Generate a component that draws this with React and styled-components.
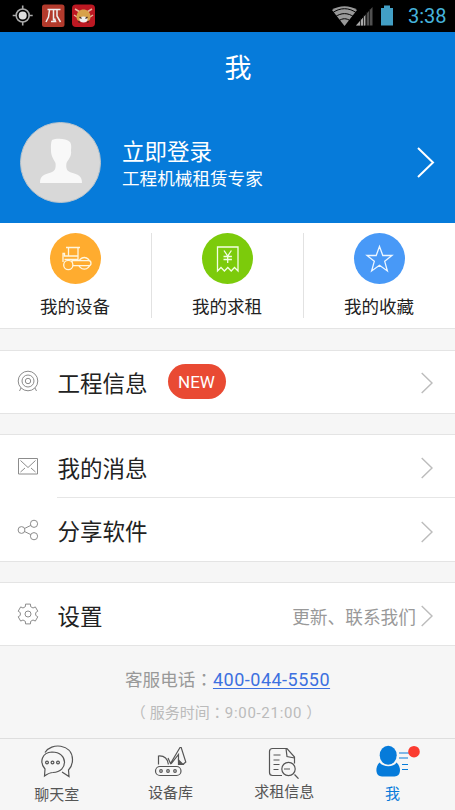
import React from 'react'
import styled, { createGlobalStyle } from 'styled-components'

const GlobalStyle = createGlobalStyle`
    * {
        box-sizing: border-box;
    }

    body {
        margin: 0;
        background: #f6f6f6;
        font-family: Roboto, "Noto Sans CJK SC", sans-serif;
    }

    svg {
        display: block;
        flex: none;
        fill: none;
    }
`;

const Screen = styled.div`
    display: flex;
    flex-direction: column;
    width: 455px;
    height: 810px;
    overflow: hidden;
    background: #f6f6f6;
`;

const StatusBar = styled.div`
    display: flex;
    justify-content: space-between;
    height: 32px;
    padding: 0 8px 0 12px;
    background: #000;
`;

const StatusGroup = styled.div`
    display: flex;
    align-items: center;
`;

const Clock = styled.span`
    width: 39px;
    margin-left: 13px;
    color: #46b4dc;
    font-size: 20px;
    line-height: 32px;
    white-space: nowrap;
`;

const Header = styled.header`
    height: 191px;
    background: #067bda;
    color: #fff;
`;

const Title = styled.h1`
    height: 74px;
    margin: 0;
    padding-left: 21px;
    font-size: 27px;
    font-weight: 400;
    line-height: 74px;
    text-align: center;
`;

const Profile = styled.div`
    display: flex;
    align-items: center;
    height: 82px;
    margin-top: 15px;
    padding: 0 20px;
`;

const Avatar = styled.div`
    width: 81px;
    height: 81px;
    border: 1px solid #b9c4cc;
    border-radius: 50%;
    background: #d8d8d8;
`;

const ProfileText = styled.div`
    flex: 1;
    padding: 4px 0 0 21px;
`;

const Login = styled.div`
    font-size: 22.5px;
    line-height: 30px;
`;

const Slogan = styled.div`
    font-size: 17.6px;
    line-height: 24px;
`;

const Shortcuts = styled.div`
    display: flex;
    height: 106px;
    padding: 10px 0;
    border-bottom: 1px solid #e4e4e4;
    background: #fff;
`;

const Shortcut = styled.div`
    display: flex;
    flex: 1;
    flex-direction: column;
    align-items: center;
    padding-right: 1px;
    color: #222;
    font-size: 17.5px;
    line-height: 24px;

    & + & {
        border-left: 1px solid #e2e2e2;
    }
`;

const Bubble = styled.div`
    width: 51px;
    height: 51px;
    margin-bottom: 11px;
    border-radius: 50%;
    background: ${props => props.$color};
`;

const Groups = styled.div`
    display: flex;
    flex-direction: column;
    gap: 20px;
    padding-top: 21px;
`;

const Group = styled.div`
    border-top: 1px solid #e4e4e4;
    border-bottom: 1px solid #e4e4e4;
    background: #fff;
`;

const Row = styled.div`
    display: flex;
    align-items: center;
    height: ${props => props.$height || 62}px;
    padding: 0 22px ${props => props.$bottom || 0}px 17px;
`;

const RowLabel = styled.span`
    margin-left: 18.5px;
    padding-top: 5px;
    color: #222;
    font-size: 22.5px;
    line-height: 30px;
`;

const Divider = styled.div`
    height: 1px;
    margin-left: 57px;
    background: #e6e6e6;
`;

const NewBadge = styled.span`
    width: 58px;
    height: 35px;
    margin-left: 20px;
    border-radius: 18px;
    background: #e94a33;
    color: #fff;
    font-size: 17px;
    line-height: 36px;
    text-align: center;
`;

const RowEnd = styled.div`
    display: flex;
    align-items: center;
    margin-left: auto;
    padding-top: 4px;
    gap: 5px;
`;

const Hint = styled.span`
    padding-top: 4px;
    color: #999;
    font-size: 17.7px;
    line-height: 24px;
`;

const Service = styled.div`
    flex: 1;
    padding-top: 19px;
    text-align: center;
`;

const Phone = styled.div`
    color: #999;
    font-size: 17.6px;
    line-height: 28px;

    > a {
        color: #3c70e0;
        font-size: 18px;
        letter-spacing: .5px;
        text-decoration: underline;
        text-underline-offset: 2px;
    }
`;

const Hours = styled.div`
    margin-top: 6px;
    padding-right: 3px;
    color: #bbb;
    font-size: 15px;
    line-height: 24px;
`;

const HoursRange = styled.span`
    letter-spacing: .7px;
`;

/* full-width colon and brackets, centred in their box */
const Punct = styled.span`
    margin: 0 ${props => props.$after || 0}px 0 ${props => props.$before || 0}px;
    font-family: "Noto Sans CJK TC", sans-serif;
`;

const TabBar = styled.nav`
    display: flex;
    height: 72px;
    border-top: 1px solid #dedede;
`;

const Tab = styled.div`
    display: flex;
    flex: 1;
    flex-direction: column;
    align-items: center;
    padding-top: ${props => props.$top}px;
    color: ${props => props.$active ? '#067bda' : '#555'};
    font-size: 15px;
`;

const TabLabel = styled.span`
    margin-top: ${props => props.$top}px;
    padding-right: ${props => props.$right || 0}px;
    line-height: 20px;
`;

function Arrow() {
    return (
        <svg width="12" height="22" viewBox="0 0 12 22" stroke="#bcbcbc" strokeWidth="1.4">
            <path d="M.7 1 11 11 .7 21" />
        </svg>
    )
}

function StatusIcons() {
    return (
        <StatusGroup>
            <svg width="86" height="32" viewBox="12 0 86 32">
                <circle cx="22.700" cy="15.500" r="6.500" stroke="#aaa" strokeWidth="1.600" />
                <circle cx="22.700" cy="15.500" r="4" fill="#ddd" />
                <path d="M22.700 5.500v4M22.700 21.500v4M12.700 15.500h4M28.700 15.500h4" stroke="#aaa" strokeWidth="1.600" />
                <rect x="42" y="4.500" width="22.500" height="22.500" rx="2.500" fill="#b23a2c" />
                <path d="M47.500 9.500h13M49.500 10l-1 7-2.500 5M53.500 10v10.500M51 21.500h4.500l-1-3M57 10v6l3.500 6" stroke="#eee" strokeWidth="1.500" />
                <rect x="72" y="4.500" width="23" height="22.500" rx="4" fill="#bc1822" />
                <path d="M75 9l5 3M92 9l-5 3M74 15l3 2M93 15l-3 2" stroke="#e6b9a0" strokeWidth="1.500" />
                <path d="M76.500 17c0-10 14-10 14 0 0 3-2 4-3 4h-8c-1 0-3-1-3-4z" fill="#d7a14a" />
                <ellipse cx="83.500" cy="19.500" rx="4" ry="3" fill="#eee" />
                <path d="M79.500 17l2 1.500M87.500 17l-2 1.500M78 21.500l2 1M89 21.500l-2 1" stroke="#432c20" strokeWidth="1.300" />
            </svg>
        </StatusGroup>
    )
}

function SignalIcons() {
    return (
        <svg width="64" height="32" viewBox="332 0 64 32">
            <path d="M333 10c7-5 18-5 25 0L345.500 26z" fill="#999" />
            <path d="M333 13.200c8-6 17-6 25 0M336 17c6-4.500 13-4.500 19 0M339.500 21c4-3 8-3 12 0" stroke="#000" strokeWidth="1" />
            <path d="M357 25.500 373.500 7v18.500z" fill="#505050" />
            <path d="M357 25.500 366 15.500v10z" fill="#aaa" />
            <path d="M361.500 18v8M364.500 15v11M367.500 12v14M370.500 9v17" stroke="#111" strokeWidth=".8" />
            <path d="M382 8h3V5.500h6V8h3v17.500h-12z" fill="#429fc5" />
        </svg>
    )
}

function Person() {
    return (
        <svg width="79" height="79" viewBox="21 123 79 79">
            <path d="M52 140c4-2 14-2 18 2 2 3 1 7 1 9 1 5-3 9-4.500 12-.7 5 0 8 4.500 9.500 7 2 11 3 11 10.500H40c0-7.500 4-8.500 11-10.500 4.500-1.500 5-5 4.500-9.500-1.500-3-4.500-7-4.500-12 0-3-.5-8 1-11z" fill="#f8f8f8" />
        </svg>
    )
}

function Roller() {
    return (
        <svg width="51" height="51" viewBox="0 0 51 51" stroke="#fff6df" strokeWidth="1.300">
            <path d="M16 14.500h14M18.500 15v8M28 15v12.500M13 29v-8.500h1.500v2.500H28M14.500 26.500H28" />
            <circle cx="34.300" cy="30.300" r="5.800" />
            <path d="M22 27.700h16.500a2.500 2.500 0 0 1 0 5H22z" fill="#ffac2f" />
            <circle cx="18.300" cy="32" r="4.600" fill="#ffac2f" />
        </svg>
    )
}

function Receipt() {
    return (
        <svg width="51" height="51" viewBox="0 0 51 51" stroke="#f3ffe4" strokeWidth="1.300">
            <path d="M15.500 14H36v24l-3.500-3.500-3.300 3.500-3.400-3.500-3.400 3.500-3.400-3.500-3.500 3.500z" />
            <path d="M22 17.500l3.700 5.500 3.700-5.500M25.700 23v7M21.500 23.500h8.400M21.500 26.500h8.400" />
        </svg>
    )
}

function Star() {
    return (
        <svg width="51" height="51" viewBox="0 0 51 51" stroke="#eef7ff" strokeWidth="1.300">
            <path d="M25.500 13.500l3.300 9h9.200l-7.300 5.800 2.700 9.700-7.900-5.700-7.900 5.700 2.700-9.700-7.300-5.800h9.200z" />
        </svg>
    )
}

function TargetIcon() {
    return (
        <svg width="22" height="22" viewBox="0 0 22 22" stroke="#8c8c8c" strokeWidth="1">
            <circle cx="11" cy="11" r="9.800" />
            <circle cx="11" cy="11" r="6" />
            <circle cx="11" cy="11" r="2.700" />
            <path d="M4 18 2.500 21M18 18l1.500 3" />
        </svg>
    )
}

function MailIcon() {
    return (
        <svg width="22" height="22" viewBox="0 0 22 22" stroke="#8c8c8c" strokeWidth="1">
            <path d="M1.500 3.500h19v15.500h-19zM3.500 5.500 11 12.500l7.500-7M3.500 17l4.500-4M18.500 17 14 13" />
        </svg>
    )
}

function ShareIcon() {
    return (
        <svg width="22" height="22" viewBox="0 0 22 22" stroke="#8c8c8c" strokeWidth="1">
            <circle cx="4.500" cy="11" r="3.400" />
            <circle cx="17" cy="4.800" r="3.600" />
            <circle cx="17" cy="17.200" r="3.600" />
            <path d="M7.500 9.500 13.800 6.400M7.500 12.500l6.300 3.100" />
        </svg>
    )
}

// six teeth, each with two outer and two root corners
const gearPoints = [0, 60, 120, 180, 240, 300].flatMap(tooth =>
    [[-20, 7.8], [-14, 10.2], [14, 10.2], [20, 7.8]].map(([offset, radius]) => {
        const angle = (tooth + offset) * Math.PI / 180
        return `${11 + radius * Math.sin(angle)},${11 - radius * Math.cos(angle)}`
    })
).join(' ')

function GearIcon() {
    return (
        <svg width="22" height="22" viewBox="0 0 22 22" stroke="#8c8c8c" strokeWidth="1">
            <polygon points={gearPoints} strokeLinejoin="round" />
            <circle cx="11" cy="11" r="3" />
        </svg>
    )
}

function ChatIcon() {
    return (
        <svg width="34" height="34" viewBox="40 744 34 34" stroke="#555" strokeWidth="1.200">
            <path d="M45 752.500c6-10 27-9 27.500 7 0 5-1.500 8-4 10.500l.5 6.500-7-4.500" />
            <path d="M44.500 776l.5-7c-6-7-3-16.500 7-17 16.500 0 16.500 20 1 20.500-3 0-5 1-8.500 3.500z" />
            <circle cx="47" cy="762.500" r="1.400" />
            <circle cx="52.500" cy="762.500" r="1.400" />
            <circle cx="58" cy="762.500" r="1.400" />
        </svg>
    )
}

function DiggerIcon() {
    return (
        <svg width="34" height="32" viewBox="154 746 34 32" stroke="#555" strokeWidth="1.200">
            <rect x="155.500" y="766.500" width="25.500" height="9" rx="4.500" />
            <circle cx="161" cy="771" r="1.300" />
            <circle cx="168" cy="771" r="1.300" />
            <circle cx="175" cy="771" r="1.300" />
            <path d="M158.500 764.500v-8.500c6-.5 9.500 3 9.800 8.500M168 758l2.500 5.500 9.500-16h1.200l4.600 14.500-3 2.500M171 764l7.500-9.500v6" />
            <path d="M178.500 760v4.500h4.500z" fill="#555" />
        </svg>
    )
}

function SearchDocIcon() {
    return (
        <svg width="34" height="33" viewBox="267 746 34 33" stroke="#555" strokeWidth="1.200">
            <path d="M282 775.500h-9.500a3 3 0 0 1-3-3V751.500a3 3 0 0 1 3-3h14.500l7.500 8.500v6.500M286 748.500l1 8 7.500 1.500M273.500 755h7M273.500 760h6M273.500 764.500h6M273.500 769.500h5M284 769h6" />
            <circle cx="288.500" cy="769" r="6.700" />
            <path d="M294.500 774.500l4 4.200" />
        </svg>
    )
}

function MeIcon() {
    return (
        <svg width="46" height="34" viewBox="375 744 46 34">
            <path d="M379.500 762.500c-4.500 4-4.500 14 2.500 14h12.500c7 0 7-10 2-14-3 5-13 5-17 0z" fill="#067bda" />
            <ellipse cx="388.200" cy="755.300" rx="8.500" ry="9.500" fill="#067bda" />
            <path d="M399 753h10M399 758h9M402 764.500h6M402 769.500h6" stroke="#067bda" strokeWidth="1.200" />
            <circle cx="414" cy="751.700" r="5.800" fill="#fb3b30" />
        </svg>
    )
}

function App() {
    return (
        <>
            <GlobalStyle />
            <Screen>
                <StatusBar>
                    <StatusIcons />
                    <StatusGroup>
                        <SignalIcons />
                        <Clock>3:38</Clock>
                    </StatusGroup>
                </StatusBar>

                <Header>
                    <Title>我</Title>
                    <Profile>
                        <Avatar><Person /></Avatar>
                        <ProfileText>
                            <Login>立即登录</Login>
                            <Slogan>工程机械租赁专家</Slogan>
                        </ProfileText>
                        <svg width="18" height="32" viewBox="0 0 18 32" stroke="#fff" strokeWidth="2">
                            <path d="M1 2 16 16.500 1 31" />
                        </svg>
                    </Profile>
                </Header>

                <Shortcuts>
                    <Shortcut>
                        <Bubble $color="#ffac2f"><Roller /></Bubble>
                        我的设备
                    </Shortcut>
                    <Shortcut>
                        <Bubble $color="#7ccb0b"><Receipt /></Bubble>
                        我的求租
                    </Shortcut>
                    <Shortcut>
                        <Bubble $color="#4899f7"><Star /></Bubble>
                        我的收藏
                    </Shortcut>
                </Shortcuts>

                <Groups>
                    <Group>
                        <Row $bottom={2}>
                            <TargetIcon />
                            <RowLabel>工程信息</RowLabel>
                            <NewBadge>NEW</NewBadge>
                            <RowEnd><Arrow /></RowEnd>
                        </Row>
                    </Group>

                    <Group>
                        <Row>
                            <MailIcon />
                            <RowLabel>我的消息</RowLabel>
                            <RowEnd><Arrow /></RowEnd>
                        </Row>
                        <Divider />
                        <Row $height={63}>
                            <ShareIcon />
                            <RowLabel>分享软件</RowLabel>
                            <RowEnd><Arrow /></RowEnd>
                        </Row>
                    </Group>

                    <Group>
                        <Row>
                            <GearIcon />
                            <RowLabel>设置</RowLabel>
                            <RowEnd>
                                <Hint>更新、联系我们</Hint>
                                <Arrow />
                            </RowEnd>
                        </Row>
                    </Group>
                </Groups>

                <Service>
                    <Phone>客服电话<Punct>：</Punct><a>400-044-5550</a></Phone>
                    <Hours>
                        <Punct $after={4}>（</Punct>服务时间<Punct>：</Punct>
                        <HoursRange>9:00-21:00</HoursRange>
                        <Punct $before={4}>）</Punct>
                    </Hours>
                </Service>

                <TabBar>
                    <Tab $top={5}>
                        <ChatIcon />
                        <TabLabel $top={7}>聊天室</TabLabel>
                    </Tab>
                    <Tab $top={7}>
                        <DiggerIcon />
                        <TabLabel $top={5}>设备库</TabLabel>
                    </Tab>
                    <Tab $top={7}>
                        <SearchDocIcon />
                        <TabLabel $top={3}>求租信息</TabLabel>
                    </Tab>
                    <Tab $top={5} $active>
                        <MeIcon />
                        <TabLabel $top={6} $right={11}>我</TabLabel>
                    </Tab>
                </TabBar>
            </Screen>
        </>
    )
}

export default App
